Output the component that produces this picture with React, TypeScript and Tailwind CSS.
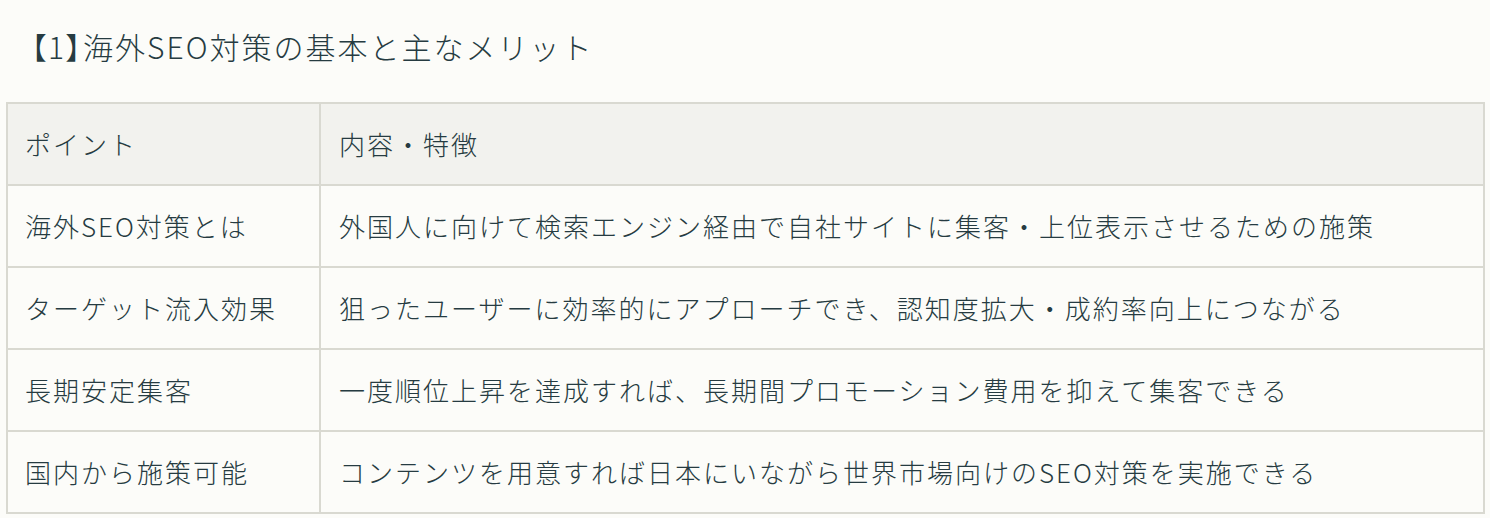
const rows: [string, string][] = [
  ['海外SEO対策とは', '外国人に向けて検索エンジン経由で自社サイトに集客・上位表示させるための施策'],
  ['ターゲット流入効果', '狙ったユーザーに効率的にアプローチでき、認知度拡大・成約率向上につながる'],
  ['長期安定集客', '一度順位上昇を達成すれば、長期間プロモーション費用を抑えて集客できる'],
  ['国内から施策可能', 'コンテンツを用意すれば日本にいながら世界市場向けのSEO対策を実施できる'],
];

export default function App() {
  return (
    <div className="min-h-[518px] bg-[#fcfcf9] pl-[6px] pr-[5px] pt-[26px] font-light text-[#263b41] [font-family:'Noto_Sans_CJK_JP','Noto_Sans',sans-serif]">
      <h2 className="mb-[36px] pl-[25px] text-[30px] leading-[40px] tracking-[2px] font-light">
        <span className="[font-feature-settings:'palt']">【1】</span>
        海外SEO対策の基本と主なメリット
      </h2>
      <table className="w-full border-collapse border-2 border-[#d9d9d1] text-[26px] tracking-[2px]">
        <thead>
          <tr className="bg-[#f2f2ee]">
            <th className="w-[313px] border-2 border-[#d9d9d1] px-[17px] py-[20px] text-left font-light leading-[40px]">ポイント</th>
            <th className="border-2 border-[#d9d9d1] px-[18px] py-[20px] text-left font-light leading-[40px]">内容・特徴</th>
          </tr>
        </thead>
        <tbody>
          {rows.map(([point, desc]) => (
            <tr key={point}>
              <td className="border-2 border-[#d9d9d1] px-[17px] py-[20px] leading-[40px]">{point}</td>
              <td className="border-2 border-[#d9d9d1] px-[18px] py-[20px] leading-[40px]">{desc}</td>
            </tr>
          ))}
        </tbody>
      </table>
    </div>
  );
}
